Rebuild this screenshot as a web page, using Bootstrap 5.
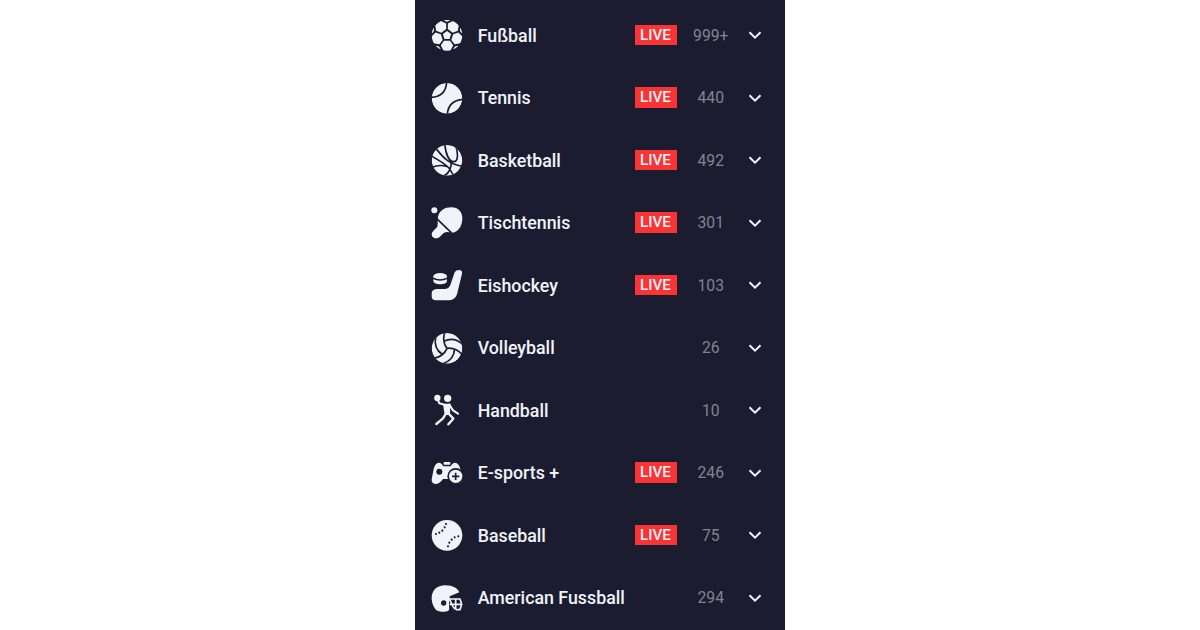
<!DOCTYPE html>
<html lang="de">
<head>
<meta charset="utf-8">
<meta name="viewport" content="width=device-width, initial-scale=1">
<title>Sportarten</title>
<link href="https://cdn.jsdelivr.net/npm/bootstrap@5.3.0/dist/css/bootstrap.min.css" rel="stylesheet">
<style>
  body { background: #fff; font-family: Roboto, "Liberation Sans", sans-serif; }
  .sports-panel { width: 370px; height: 630px; padding-top: 3.75px; background: #1c1c31; color: #f0f3fa; }
  .sport-row { height: 62.5px; padding-left: 9px; padding-right: 20px; font-size: 17.8px; }
  .sport-icon { width: 46px; height: 46px; margin-right: 7.700px; fill: #f0f3fa; }
  .sport-icon .cut { fill: none; stroke: #1c1c31; stroke-width: 5; stroke-linejoin: round; }
  .sport-icon .hole { fill: #1c1c31; }
  .sport-icon .limb { fill: none; stroke: #f0f3fa; stroke-linecap: round; stroke-linejoin: round; }
  .sport-name, .live-tag { font-weight: 500; }
  .sport-name { padding-top: 2px; }
  .live-tag { width: 42px; height: 20.5px; background: #fa3434; font-size: 15.2px; line-height: 21px; }
  .sport-count { width: 68.5px; font-size: 15.7px; color: #83838f; padding-top: 1px; }
  .chevron { width: 20px; height: 16px; fill: none; stroke: #f0f3fa; stroke-width: 2; }
</style>
</head>
<body>
<svg class="position-absolute" width="0" height="0">
  <defs>
    <clipPath id="ball"><circle cx="69" cy="70" r="46"/></clipPath>
    <g id="patch"><path d="M60 86.500H78L87.500 100L79 117H59L50.500 100Z"/><path d="M59 20H79L77 26L69 29L61 26Z"/></g>
    <g id="seams"><path d="M69 70Q53 49 63 20M60 49Q90 34 117 59"/></g>
    <path id="down" d="M4 5.2L9.500 10.700L15 5.200"/>
  </defs>
</svg>
<ul class="sports-panel list-unstyled mx-auto mb-0 overflow-hidden">
  <li class="sport-row d-flex align-items-center">
    <svg class="sport-icon" viewBox="0 0 138 138"><g clip-path="url(#ball)"><path d="M69 57L81.500 66L76.700 81H61.300L56.500 66Z"/><use href="#patch"/><use href="#patch" transform="rotate(72 69 70)"/><use href="#patch" transform="rotate(144 69 70)"/><use href="#patch" transform="rotate(216 69 70)"/><use href="#patch" transform="rotate(288 69 70)"/></g></svg>
    <span class="sport-name flex-grow-1">Fußball</span><span class="live-tag text-center">LIVE</span><span class="sport-count text-center">999+</span>
    <svg class="chevron" viewBox="0 0 20 16"><use href="#down" x=".5"/></svg>
  </li>
  <li class="sport-row d-flex align-items-center">
    <svg class="sport-icon" viewBox="0 0 138 138"><g clip-path="url(#ball)"><circle cx="69" cy="70" r="46"/><path class="cut" d="M68 20C67 48 51 66 20 67M70 120C71 92 88 75 118 73"/></g></svg>
    <span class="sport-name flex-grow-1">Tennis</span><span class="live-tag text-center">LIVE</span><span class="sport-count text-center">440</span>
    <svg class="chevron" viewBox="0 0 20 16"><use href="#down" x=".5"/></svg>
  </li>
  <li class="sport-row d-flex align-items-center">
    <svg class="sport-icon" viewBox="0 0 138 138"><g clip-path="url(#ball)"><circle cx="69" cy="70" r="46"/><path class="cut" d="M34 32C52 54 72 84 118 88M62 20C65 48 74 74 89 74C104 74 102 48 95 24M20 56Q58 76 76 94L90 118M24 91Q46 82 68 88M58 118Q82 106 82 74"/></g></svg>
    <span class="sport-name flex-grow-1">Basketball</span><span class="live-tag text-center">LIVE</span><span class="sport-count text-center">492</span>
    <svg class="chevron" viewBox="0 0 20 16"><use href="#down" x=".5"/></svg>
  </li>
  <li class="sport-row d-flex align-items-center">
    <svg class="sport-icon" viewBox="0 0 138 138"><circle cx="31" cy="31" r="9"/><path d="M42 50C46 32 62 22 82 22C103 22 115 36 115 55C115 78 104 95 84 99C75 95 66 95 59 99L47 111C36 121 19 111 24 98C26 93 34 87 40 80C42 73 40 63 42 50Z"/><path class="cut" d="M35 53L88 104"/></svg>
    <span class="sport-name flex-grow-1">Tischtennis</span><span class="live-tag text-center">LIVE</span><span class="sport-count text-center">301</span>
    <svg class="chevron" viewBox="0 0 20 16"><use href="#down" x=".5"/></svg>
  </li>
  <li class="sport-row d-flex align-items-center">
    <svg class="sport-icon" viewBox="0 0 138 138"><path d="M92 31Q96 24 105 24Q116 24 114 35L99 97Q93 114 76 115H36Q23 115 23 103V94Q24 82 38 81H64Q75 80 79 69Z"/><path d="M28 45V56C28 70 69 70 69 56V45Z"/><ellipse cx="48.500" cy="43" rx="20.500" ry="10"/><path class="cut" stroke-width="4" d="M27 49Q48 59 70 49"/></svg>
    <span class="sport-name flex-grow-1">Eishockey</span><span class="live-tag text-center">LIVE</span><span class="sport-count text-center">103</span>
    <svg class="chevron" viewBox="0 0 20 16"><use href="#down" x=".5"/></svg>
  </li>
  <li class="sport-row d-flex align-items-center">
    <svg class="sport-icon" viewBox="0 0 138 138"><g clip-path="url(#ball)"><circle cx="69" cy="70" r="46"/><g class="cut"><use href="#seams"/><use href="#seams" transform="rotate(120 69 70)"/><use href="#seams" transform="rotate(240 69 70)"/></g></g></svg>
    <span class="sport-name flex-grow-1">Volleyball</span><span class="sport-count text-center">26</span>
    <svg class="chevron" viewBox="0 0 20 16"><use href="#down" x=".5"/></svg>
  </li>
  <li class="sport-row d-flex align-items-center">
    <svg class="sport-icon" viewBox="0 0 138 138"><circle cx="40" cy="33" r="9.500"/><circle cx="71" cy="34" r="11"/><path d="M57 50H79L78 84H62Z"/><path class="limb" stroke-width="6" d="M40 34L46 49L61 53M76 53L87 70L102 80"/><path class="limb" stroke-width="7" d="M65 81L57 94L37 111M75 81L88 95L73 112"/></svg>
    <span class="sport-name flex-grow-1">Handball</span><span class="sport-count text-center">10</span>
    <svg class="chevron" viewBox="0 0 20 16"><use href="#down" x=".5"/></svg>
  </li>
  <li class="sport-row d-flex align-items-center">
    <svg class="sport-icon" viewBox="0 0 138 138"><path d="M41 39Q49 36 54 43L58 49H80L84 43Q89 36 97 39Q106 43 109 58L115 88Q115 101 102 101Q91 99 83 87H57Q47 102 34 102Q22 101 23 88L29 57Q33 42 41 39Z"/><rect x="59" y="36" width="20" height="8" rx="2"/><circle class="hole" cx="46" cy="65" r="9"/><circle class="hole" cx="95" cy="79" r="25"/><circle cx="95" cy="79" r="20"/><path class="cut" stroke-width="4" d="M95 68V90M84 79H106"/></svg>
    <span class="sport-name flex-grow-1">E-sports +</span><span class="live-tag text-center">LIVE</span><span class="sport-count text-center">246</span>
    <svg class="chevron" viewBox="0 0 20 16"><use href="#down" x=".5"/></svg>
  </li>
  <li class="sport-row d-flex align-items-center">
    <svg class="sport-icon" viewBox="0 0 138 138"><circle cx="69" cy="70" r="46"/><g class="hole"><circle cx="36" cy="66" r="3.200"/><circle cx="46" cy="62" r="3.200"/><circle cx="55" cy="56" r="3.200"/><circle cx="62" cy="46" r="3.200"/><circle cx="66" cy="36" r="3.200"/><circle cx="72" cy="103" r="3.200"/><circle cx="76" cy="92" r="3.200"/><circle cx="83" cy="83" r="3.200"/><circle cx="92" cy="76" r="3.200"/><circle cx="103" cy="73" r="3.200"/></g></svg>
    <span class="sport-name flex-grow-1">Baseball</span><span class="live-tag text-center">LIVE</span><span class="sport-count text-center">75</span>
    <svg class="chevron" viewBox="0 0 20 16"><use href="#down" x=".5"/></svg>
  </li>
  <li class="sport-row d-flex align-items-center">
    <svg class="sport-icon" viewBox="0 0 138 138"><path d="M23 72C22 46 39 31 64 31C87 31 101 40 106 52L77 64V103C73 112 54 113 37 106Q24 91 23 72Z"/><circle class="hole" cx="59" cy="84" r="8"/><path class="hole" d="M75 74L82 93Q87 103 94 105L76 110Z"/><path class="limb" stroke-width="5" d="M72 72H108L113 88L108 104H98Q89 101 84 90L77 72M79 88H112M95 72V100"/></svg>
    <span class="sport-name flex-grow-1">American Fussball</span><span class="sport-count text-center">294</span>
    <svg class="chevron" viewBox="0 0 20 16"><use href="#down" x=".5"/></svg>
  </li>
</ul>
<script src="https://cdn.jsdelivr.net/npm/bootstrap@5.3.0/dist/js/bootstrap.bundle.min.js"></script>
</body>
</html>
